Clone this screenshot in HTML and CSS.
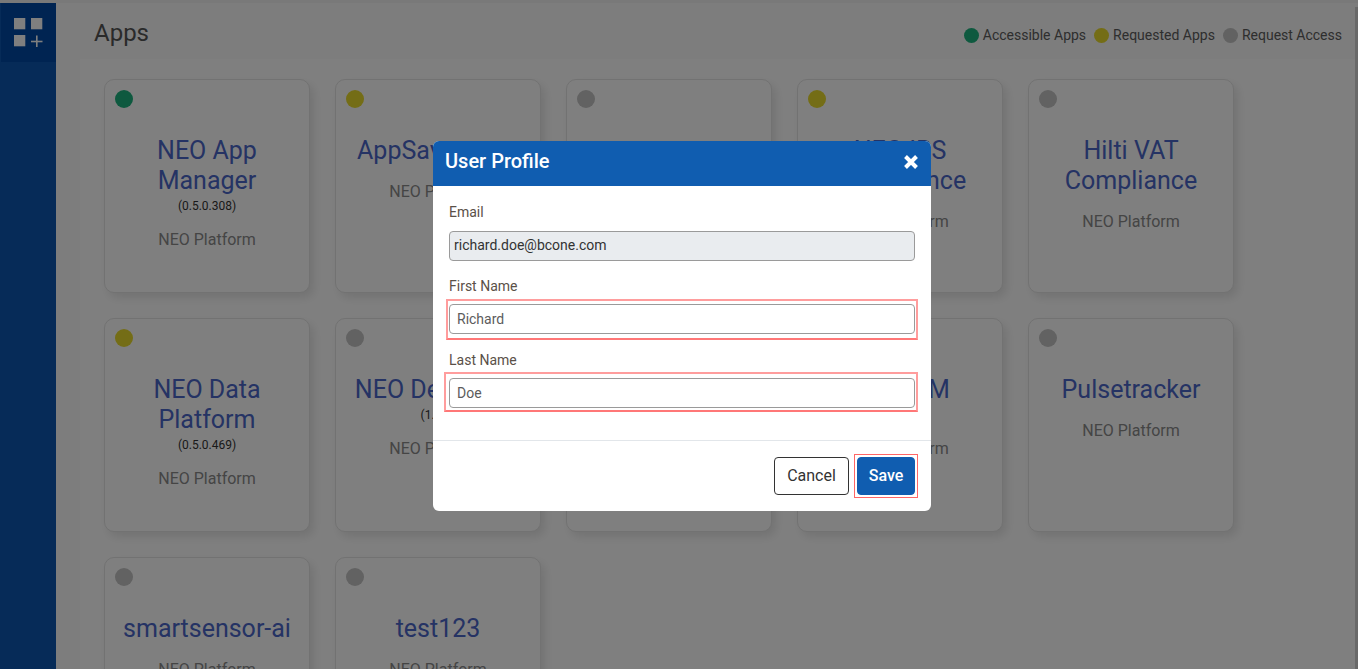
FILE: index.html
```html
<!DOCTYPE html>
<html lang="en">
<head>
<meta charset="utf-8">
<title>Apps</title>
<link rel="stylesheet" href="styles.css">
</head>
<body>
<div class="app">
  <aside class="sidebar">
    <div class="logo">
      <svg width="30" height="30" viewBox="0 0 30 30" aria-hidden="true">
        <rect x="0" y="0" width="11.3" height="11.3"/>
        <rect x="17" y="0" width="11.3" height="11.3"/>
        <rect x="0" y="17" width="11.3" height="11.3"/>
        <rect x="22" y="17.5" width="1.6" height="11.5"/>
        <rect x="17" y="22.7" width="11.5" height="1.6"/>
      </svg>
    </div>
  </aside>
  <main class="main">
    <header class="topbar">
      <h1 class="page-title">Apps</h1>
      <div class="legend">
        <span class="legend-item"><i class="dot green"></i>Accessible Apps</span>
        <span class="legend-item"><i class="dot yellow"></i>Requested Apps</span>
        <span class="legend-item"><i class="dot grey"></i>Request Access</span>
      </div>
    </header>
    <section class="grid">
      <article class="card"><i class="dot big green"></i><h2>NEO App Manager</h2><small>(0.5.0.308)</small><p>NEO Platform</p></article>
      <article class="card"><i class="dot big yellow"></i><h2>AppSaver cron</h2><p class="plain">NEO Platform</p></article>
      <article class="card"><i class="dot big grey"></i><h2>sensor</h2><p class="plain">NEO Platform</p></article>
      <article class="card"><i class="dot big yellow"></i><h2>NEO IRS Compliance</h2><p class="plain">NEO Platform</p></article>
      <article class="card"><i class="dot big grey"></i><h2>Hilti VAT Compliance</h2><p class="plain">NEO Platform</p></article>
      <article class="card"><i class="dot big yellow"></i><h2>NEO Data Platform</h2><small>(0.5.0.469)</small><p>NEO Platform</p></article>
      <article class="card"><i class="dot big grey"></i><h2>NEO Developer</h2><small>(1.0.0)</small><p>NEO Platform</p></article>
      <article class="card"><i class="dot big grey"></i><h2>NEO Files</h2><small>(1.0.0)</small><p>NEO Platform</p></article>
      <article class="card"><i class="dot big grey"></i><h2>NEO PIM</h2><small>(1.0.0)</small><p>NEO Platform</p></article>
      <article class="card"><i class="dot big grey"></i><h2>Pulsetracker</h2><p class="plain">NEO Platform</p></article>
      <article class="card"><i class="dot big grey"></i><h2>smartsensor-ai</h2><p class="plain">NEO Platform</p></article>
      <article class="card"><i class="dot big grey"></i><h2>test123</h2><p class="plain">NEO Platform</p></article>
    </section>
  </main>
</div>
<div class="scrollbar"></div>
<div class="overlay"></div>
<div class="modal">
  <div class="modal-head">
    <span class="modal-title">User Profile</span>
    <svg class="close" width="16" height="16" viewBox="0 0 16 16" aria-hidden="true"><path d="M2.5 2.5 L13.5 13.5 M13.5 2.5 L2.5 13.5"/></svg>
  </div>
  <div class="modal-body">
    <label class="field-label">Email</label>
    <div class="input disabled">richard.doe@bcone.com</div>
    <label class="field-label second">First Name</label>
    <div class="mark mark-first"><div class="input">Richard</div></div>
    <label class="field-label third">Last Name</label>
    <div class="mark mark-last"><div class="input">Doe</div></div>
  </div>
  <div class="modal-foot">
    <button class="btn cancel">Cancel</button>
    <div class="mark mark-save"><button class="btn save">Save</button></div>
  </div>
</div>
</body>
</html>
```
FILE: styles.css
```css
* { box-sizing: border-box; }
html, body { margin: 0; height: 100%; overflow: hidden; }
body { font-family: Roboto, "Liberation Sans", sans-serif; background: #fff; color: #212529; }
.app { display: flex; height: 669px; overflow: hidden; border-top: 3px solid #f2f2f2; background: #fff; }
.sidebar { width: 56px; flex: none; background: #0c56b0; padding-left: 1px; }
.logo { height: 59px; background: #0048a4; display: flex; align-items: flex-start; justify-content: center; padding-top: 15px; }
.logo svg { fill: #fff; margin-left: 1px; }
.main { flex: 1; min-width: 0; background: #fafafa; }
.topbar { height: 56px; display: flex; justify-content: space-between; align-items: center; padding: 0 16px 0 38px; }
.page-title { margin: 0; padding-top: 4px; font-size: 24px; font-weight: 400; color: #555; }
.legend { display: flex; gap: 8px; font-size: 14px; color: #5d5d5d; padding-top: 8px; }
.legend-item { display: flex; align-items: center; gap: 4px; }
.dot { display: inline-block; width: 15px; height: 15px; border-radius: 50%; flex: none; }
.dot.green { background: #1db37e; }
.dot.yellow { background: #e8da2c; }
.dot.grey { background: #c4c4c4; }
.dot.big { width: 18px; height: 18px; position: absolute; left: 10px; top: 10px; }
.grid { display: grid; grid-template-columns: repeat(5, 206px); grid-auto-rows: 214px; gap: 25px; margin-left: 24px; padding: 20px 0 0 24px; background: #fff; height: 620px; }
.card { position: relative; background: #fff; border: 1px solid #e4e4e4; border-radius: 10px; box-shadow: 4px 5px 10px rgba(0,0,0,.1); padding: 56px 16px 0; text-align: center; }
.card h2 { margin: 0; font-size: 25px; line-height: 30px; font-weight: 400; color: #4a66c8; }
.card small { display: block; font-size: 12px; line-height: 14px; color: #333; margin-top: 3px; }
.card p { margin: 17px 0 0; font-size: 16px; line-height: 20px; color: #8a8a8a; }
.card p.plain { margin-top: 16px; }
.scrollbar { position: fixed; right: 0; top: 7px; bottom: 0; width: 3px; background: #d2d2d2; }
.overlay { position: fixed; inset: 0; z-index: 1; background: rgba(0,0,0,.5); }
.modal { position: fixed; z-index: 3; left: 433px; top: 141px; width: 498px; height: 370px; background: #fff; border-radius: 6px; overflow: hidden; }
.modal-head { height: 45px; background: #105db0; color: #fff; display: flex; justify-content: space-between; align-items: flex-start; padding: 7px 12px 0; }
.modal-title { font-size: 20px; line-height: 26px; font-weight: 500; }
.close { stroke: #fff; stroke-width: 4; fill: none; margin-top: 6px; }
.modal-body { height: 255px; border-bottom: 1px solid #e2e6ea; padding: 16px 16px 0; }
.field-label { display: block; font-size: 14px; line-height: 20px; color: #5a5048; }
.field-label.second { margin-top: 15px; }
.field-label.third { margin-top: 10px; }
.input { height: 30px; margin-top: 9px; border: 1px solid #9a9a9a; border-radius: 4px; font-size: 14px; line-height: 28px; padding: 0 7px; color: #5c5c5c; background: #fff; }
.input.disabled { background: #e9ecef; padding: 0 4px; color: #333; line-height: 26px; }
.mark { border: 2px solid #ff9d9d; border-bottom-color: #f77; }
.mark .input { margin-top: 0; }
.mark-first { margin: 3px -3px 0; padding: 3px 1px 4px; }
.mark-last { margin: 2px -3px 0 -5px; padding: 4px 1px 2px 3px; }
.modal-foot { display: flex; justify-content: flex-end; align-items: flex-start; gap: 5px; padding: 13px 13px 0 0; }
.btn { font-family: inherit; font-size: 16px; border-radius: 4px; height: 38px; padding: 0 0 2px; cursor: pointer; }
.cancel { width: 75px; margin-top: 3px; background: #fff; border: 1px solid #333; color: #333; }
.save { width: 58px; background: #105db0; border: 1px solid #105db0; color: #fff; font-weight: 500; display: block; }
.mark-save { border: 1px solid #f66; padding: 2px; }
```
